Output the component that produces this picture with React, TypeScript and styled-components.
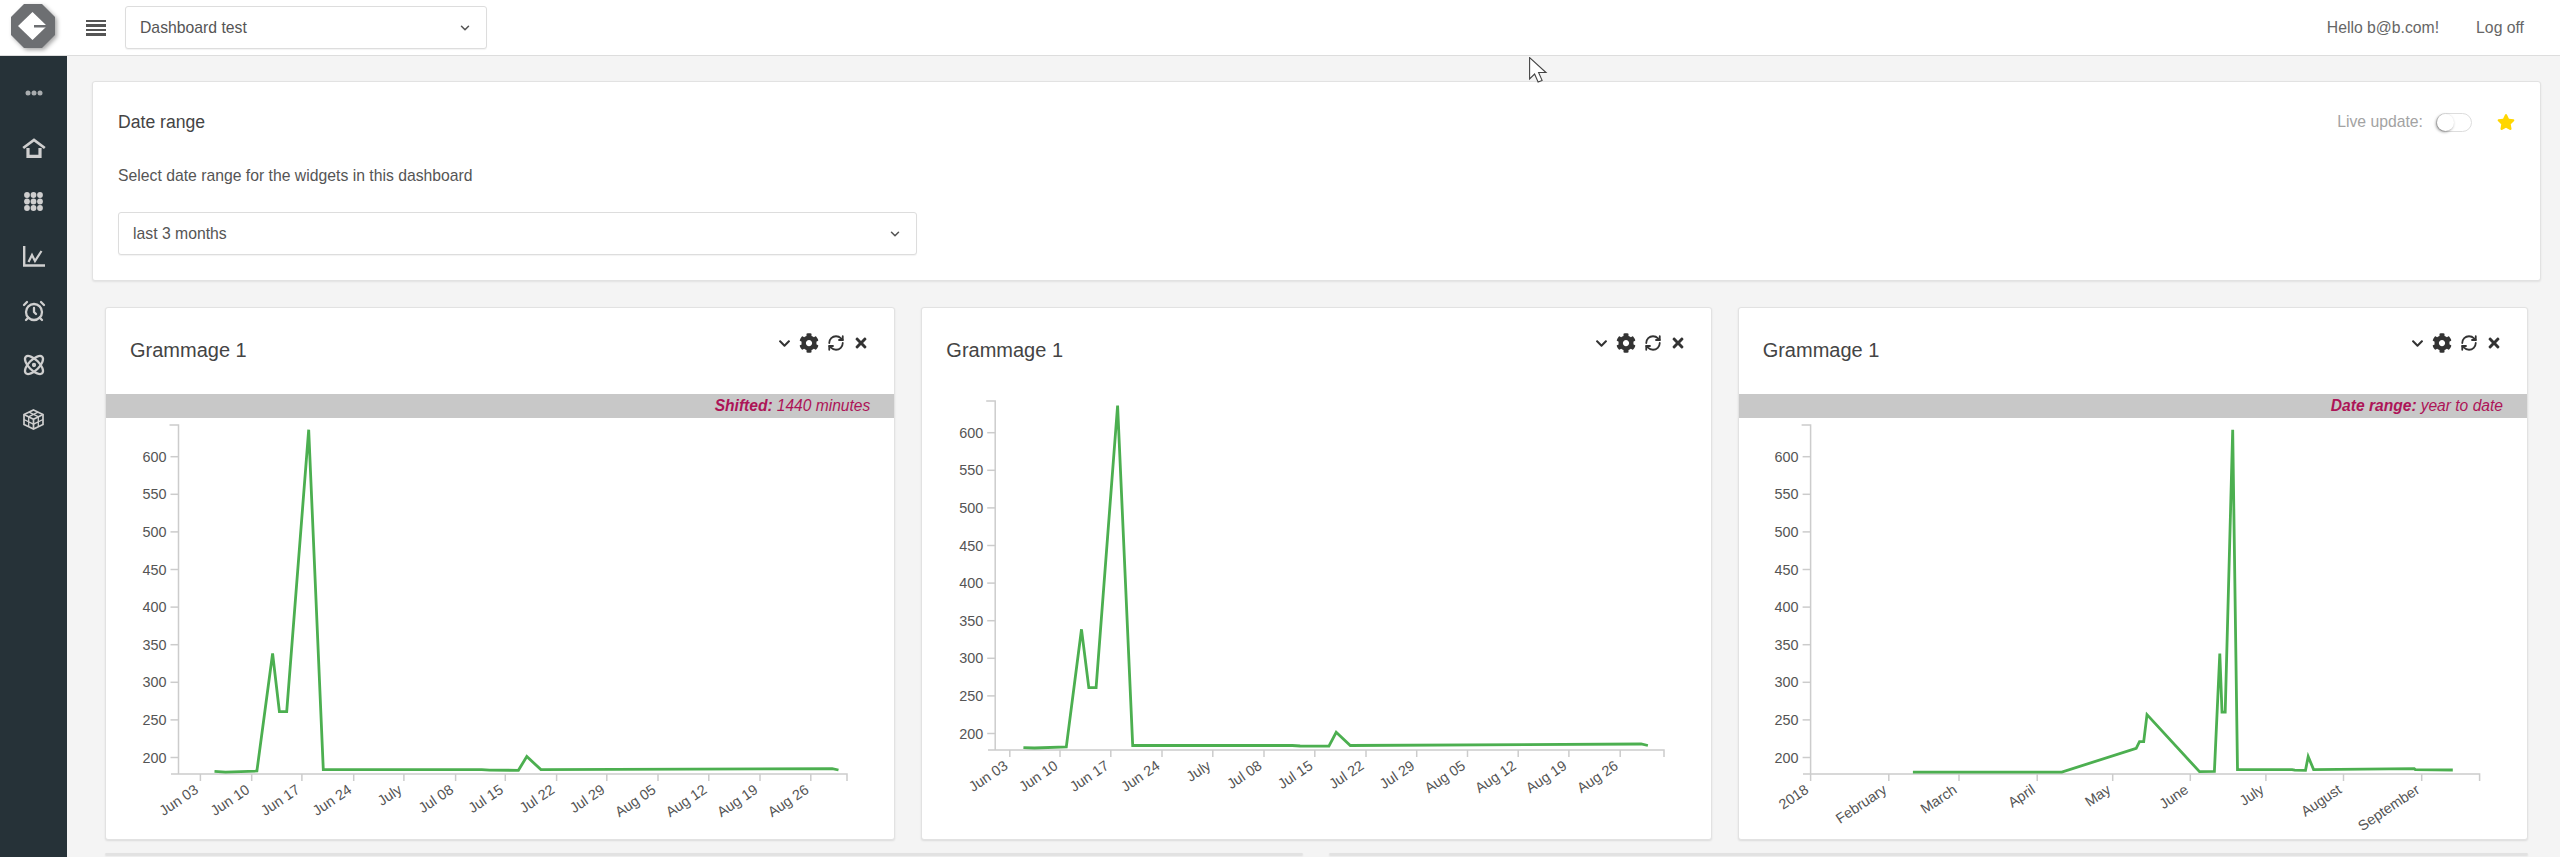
import React from "react";
import styled, { createGlobalStyle } from "styled-components";
import { AlarmClock, Atom, ChevronDown, RefreshCw } from "lucide-react";
import { FaCog, FaStar, FaTimes, FaChevronDown } from "react-icons/fa";

const GlobalStyle = createGlobalStyle`
  html, body {
    margin: 0;
    height: 100%;
    overflow: hidden;
  }
  body {
    font-family: "Liberation Sans", Arial, sans-serif;
    font-size: 15.75px;
    color: #555;
    background: #f4f4f4;
  }
`;

const Page = styled.div`
  position: relative;
  height: 857px;
  display: flex;
  flex-direction: column;
  overflow: hidden;
`;

const Header = styled.header`
  flex: 0 0 56px;
  box-sizing: border-box;
  display: flex;
  align-items: center;
  background: #fff;
  border-bottom: 1px solid #ddd;
`;

const LogoBox = styled.div`
  flex: 0 0 65px;
  padding-bottom: 3px;
  display: flex;
  justify-content: center;
  align-items: center;
`;

const Hamburger = styled.div`
  width: 20px;
  margin: 0 19px 0 21px;
  display: flex;
  flex-direction: column;
  gap: 2px;

  span {
    height: 2.5px;
    background: #555;
  }
`;

const SelectBox = styled.div<{ $width: number }>`
  box-sizing: border-box;
  width: ${(p) => p.$width}px;
  height: 43px;
  padding: 0 14px;
  display: flex;
  align-items: center;
  justify-content: space-between;
  background: #fff;
  border: 1px solid #ddd;
  border-radius: 3px;
  box-shadow: 0 1px 1px rgba(0, 0, 0, 0.05);
  color: #555;
`;

const UserArea = styled.div`
  margin-left: auto;
  padding-right: 36px;
  display: flex;
  gap: 37px;
  color: #666;
`;

const Body = styled.div`
  flex: 1;
  display: flex;
  min-height: 0;
`;

const Sidebar = styled.nav`
  flex: 0 0 67px;
  padding-top: 10px;
  background: #263238;
  display: flex;
  flex-direction: column;
`;

const NavItem = styled.div<{ $dim?: boolean }>`
  height: 54.4px;
  display: flex;
  align-items: center;
  justify-content: center;
  color: ${(p) => (p.$dim ? "#a9adaf" : "#cfcfcf")};
`;

const Main = styled.main`
  flex: 1;
  min-width: 0;
  padding: 25px 19px 0 25px;
`;

const DateCard = styled.section`
  box-sizing: border-box;
  height: 200px;
  padding: 28px 25px 0;
  background: #fff;
  border: 1px solid #e2e2e2;
  border-radius: 3px;
  box-shadow: 0 1px 2px rgba(0, 0, 0, 0.08);
`;

const DateTop = styled.div`
  display: flex;
  align-items: center;
  justify-content: space-between;
  height: 24px;
  margin-bottom: 32px;
`;

const DateTitle = styled.h2`
  margin: 0;
  font-size: 17.6px;
  font-weight: 400;
  color: #444;
`;

const LiveArea = styled.div`
  display: flex;
  align-items: center;
  color: #a3a3a3;
`;

const Toggle = styled.div`
  position: relative;
  box-sizing: border-box;
  width: 36px;
  height: 19px;
  margin: 0 25px 0 13px;
  border: 1px solid #ddd;
  border-radius: 10px;
  background: #fff;

  &::before {
    content: "";
    position: absolute;
    left: 0;
    top: 0;
    width: 17px;
    height: 17px;
    border-radius: 50%;
    background: #fff;
    box-shadow: -1px 1px 3px rgba(0, 0, 0, 0.45);
  }
`;

const HelpText = styled.p`
  margin: 0 0 26px;
  line-height: 20px;
  color: #555;
`;

const WidgetGrid = styled.div`
  margin-top: 26px;
  padding: 0 13px;
  display: grid;
  grid-template-columns: repeat(6, 1fr);
  column-gap: 26px;
  row-gap: 13px;
`;

const WidgetCard = styled.article<{ $span: number }>`
  grid-column: span ${(p) => p.$span};
  min-width: 0;
  background: #fff;
  border: 1px solid #e2e2e2;
  border-radius: 3px;
  box-shadow: 0 1px 2px rgba(0, 0, 0, 0.1);
`;

const WidgetHead = styled.div`
  height: 86px;
  box-sizing: border-box;
  padding: 22px 25px 0 24px;
  display: flex;
  justify-content: space-between;
  align-items: flex-start;
`;

const WidgetTitle = styled.h3`
  margin: 0;
  font-size: 20px;
  line-height: 40px;
  font-weight: 400;
  color: #444;
`;

const WidgetTools = styled.div`
  margin-top: 1px;
  display: flex;
  align-items: center;
  gap: 8px;
  height: 24px;
  color: #333;
`;

const Banner = styled.div`
  height: 24px;
  padding-right: 24px;
  background: #c8c8c8;
  display: flex;
  align-items: center;
  justify-content: flex-end;
  gap: 4px;
  font-size: 15.6px;
  font-style: italic;
  color: #ad1457;

  b {
    font-weight: 700;
  }
`;

const ChartSvg = styled.svg`
  display: block;
`;

const AxisText = styled.text`
  font-family: "Liberation Sans", Arial, sans-serif;
  font-size: 14.4px;
  fill: #555;
`;

const Cursor = styled.svg`
  position: absolute;
  left: 1529px;
  top: 57px;
`;

const Logo = () => (
  <svg width="46" height="46" viewBox="0 0 46 46" style={{ filter: "drop-shadow(2px 2px 2px rgba(0,0,0,.35))" }}>
    <polygon points="14,1 32,1 45,14 45,32 32,45 14,45 1,32 1,14" fill="#6d6f72" />
    <polygon points="22.500,9 8,23 22.500,37 37,23" fill="#fff" />
    <rect x="24" y="22" width="13" height="2.500" fill="#6d6f72" />
  </svg>
);

const HomeIcon = () => (
  <svg width="24" height="20" viewBox="0 0 24 20" fill="none" stroke="currentColor" strokeWidth="2.800">
    <path d="M1.200 10 12 2l10.800 8" />
    <path d="M6 10v8.300h12V10" strokeWidth="3.200" />
  </svg>
);

const GridIcon = () => (
  <svg width="19" height="19" viewBox="0 0 19 19" fill="currentColor">
    {[3, 9.5, 16].flatMap((y) =>
      [3, 9.5, 16].map((x) => <circle key={`${x}-${y}`} cx={x} cy={y} r="2.900" />)
    )}
  </svg>
);

const DotsIcon = () => (
  <svg width="18" height="6" viewBox="0 0 18 6" fill="currentColor">
    <circle cx="3" cy="3" r="2.500" />
    <circle cx="9" cy="3" r="2.500" />
    <circle cx="15" cy="3" r="2.500" />
  </svg>
);

const LineIcon = () => (
  <svg width="22" height="21" viewBox="0 0 22 21" fill="none" stroke="currentColor" strokeWidth="2.400">
    <path d="M1.200 0v19.500H22" />
    <path d="M5.500 16 9 9l3 6 6.500-10" strokeWidth="2.200" />
  </svg>
);

const CubeIcon = () => (
  <svg width="21" height="21" viewBox="0 0 21 21" fill="none" stroke="currentColor" strokeWidth="1.700">
    <path d="M10.500 1 20 5.500v10L10.500 20 1 15.500v-10z" />
    <path d="M1 5.500l9.500 4.700L20 5.500M10.500 10.200V20" />
    <path d="M6 3.200l9.500 4.700M15 3.200 5.500 7.900M1 10.500l9.500 4.700 9.500-4.700M5.700 8v9.500M15.300 8v9.500" strokeWidth="1.300" />
  </svg>
);

type Tick = { x: number; label?: string };
type ChartProps = { ticks: Tick[]; axisX: number; startX: number; endX: number; line: [number, number][] };

const Y_VALUES = [600, 550, 500, 450, 400, 350, 300, 250, 200];
const valueToY = (v: number) => 38.7 + ((600 - v) * 300.8) / 400;
const AXIS_TOP = 7;
const AXIS_BOTTOM = 356;

const Chart = ({ ticks, axisX, startX, endX, line }: ChartProps) => (
  <ChartSvg width="788" height="421" viewBox="1 0 788 421">
    <g stroke="#ccc" strokeWidth="1.500" fill="none">
      <path d={`M${axisX - 9} ${AXIS_TOP}H${axisX}V${AXIS_BOTTOM}`} />
      <path d={`M${startX} ${AXIS_BOTTOM}H${endX}v7`} />
      {Y_VALUES.map((v) => (
        <path key={v} d={`M${axisX - 8} ${valueToY(v)}h8`} />
      ))}
      {ticks.map((t) => (
        <path key={t.x} d={`M${t.x} ${AXIS_BOTTOM}v7`} />
      ))}
    </g>
    {Y_VALUES.map((v) => (
      <AxisText key={v} x={axisX - 12} y={valueToY(v) + 5} textAnchor="end">
        {v}
      </AxisText>
    ))}
    {ticks
      .filter((t) => t.label)
      .map((t) => (
        <AxisText
          key={t.label}
          x={t.x - 1}
          y={AXIS_BOTTOM + 18}
          textAnchor="end"
          transform={`rotate(-34 ${t.x - 1} ${AXIS_BOTTOM + 18})`}
        >
          {t.label}
        </AxisText>
      ))}
    <polyline
      points={line.map((p) => p.join(",")).join(" ")}
      fill="none"
      stroke="#4caf50"
      strokeWidth="2.800"
      strokeLinejoin="miter"
    />
  </ChartSvg>
);

const WEEK_LABELS = [
  "Jun 03", "Jun 10", "Jun 17", "Jun 24", "July", "Jul 08", "Jul 15",
  "Jul 22", "Jul 29", "Aug 05", "Aug 12", "Aug 19", "Aug 26",
];

const CHART_SHIFTED: ChartProps = {
  axisX: 73.5,
  startX: 66,
  endX: 742,
  ticks: [95.4, 146.7, 196.9, 248.7, 298.9, 350.6, 400.3, 451.6, 501.8, 553, 603.8, 655, 705.8].map((x, i) => ({
    x,
    label: WEEK_LABELS[i],
  })),
  line: [
    [109.5, 353.4], [120.5, 354.1], [151.9, 353], [167.6, 235.5], [174.4, 293.7], [181.7, 293.7],
    [203.7, 11.7], [218.3, 351.6], [376.8, 351.6], [384.6, 352.2], [413.4, 352.3], [421.8, 338.5],
    [435.9, 351.6], [727.2, 350.6], [733.5, 352],
  ],
};

const CHART_PLAIN: ChartProps = {
  axisX: 74.2,
  startX: 67,
  endX: 743,
  ticks: [88.8, 139, 189.8, 241, 291.8, 343, 393.8, 445, 495.7, 546.5, 597.2, 647.9, 699.2].map((x, i) => ({
    x,
    label: WEEK_LABELS[i],
  })),
  line: [
    [102.4, 353.6], [113.4, 354], [145.3, 352.9], [160.5, 235.3], [167.8, 293.6], [175.1, 293.6],
    [196.6, 11.5], [211.7, 351.5], [371.3, 351.5], [379.1, 352], [407.9, 352.2], [415.2, 338.3],
    [429.3, 351.5], [720.1, 350], [726.9, 351.5],
  ],
};

const CHART_YEAR: ChartProps = {
  axisX: 72.6,
  startX: 65,
  endX: 741.6,
  ticks: [
    { x: 72.6, label: "2018" },
    { x: 150.8, label: "February" },
    { x: 221, label: "March" },
    { x: 299.2, label: "April" },
    { x: 374.7, label: "May" },
    { x: 452.3, label: "June" },
    { x: 527.9, label: "July" },
    { x: 605.5, label: "August" },
    { x: 683.7, label: "September" },
  ],
  line: [
    [174.9, 354.1], [323.8, 354.1], [398.2, 330.3], [401.5, 323.6], [405.7, 323.6], [409, 296.6],
    [461.5, 353.7], [476.4, 353.4], [481.8, 235.5], [484, 294.1], [487.2, 294.1], [494.7, 11.7],
    [499.5, 351.6], [554.1, 351.6], [556.8, 352.2], [567.5, 352.3], [570.2, 338.5], [575.6, 351.6],
    [676.2, 350.6], [677.3, 351.6], [714.8, 352],
  ],
};

const Widget = ({ chart, label, value }: { chart: ChartProps; label?: string; value?: string }) => (
  <WidgetCard $span={2}>
    <WidgetHead>
      <WidgetTitle>Grammage 1</WidgetTitle>
      <WidgetTools>
        <FaChevronDown size={13} />
        <FaCog size={20} />
        <RefreshCw size={18} strokeWidth={2.4} />
        <FaTimes size={16} />
      </WidgetTools>
    </WidgetHead>
    {label && (
      <Banner>
        <b>{label}</b>
        <span>{value}</span>
      </Banner>
    )}
    <Chart {...chart} />
  </WidgetCard>
);

export default function App() {
  return (
    <Page>
      <GlobalStyle />
      <Header>
        <LogoBox>
          <Logo />
        </LogoBox>
        <Hamburger>
          <span />
          <span />
          <span />
          <span />
        </Hamburger>
        <SelectBox $width={362}>
          Dashboard test
          <ChevronDown size={14} strokeWidth={2.6} />
        </SelectBox>
        <UserArea>
          <span>Hello b@b.com!</span>
          <span>Log off</span>
        </UserArea>
      </Header>
      <Body>
        <Sidebar>
          <NavItem $dim><DotsIcon /></NavItem>
          <NavItem><HomeIcon /></NavItem>
          <NavItem><GridIcon /></NavItem>
          <NavItem><LineIcon /></NavItem>
          <NavItem><AlarmClock size={24} strokeWidth={2.3} /></NavItem>
          <NavItem><Atom size={24} strokeWidth={2.3} /></NavItem>
          <NavItem><CubeIcon /></NavItem>
        </Sidebar>
        <Main>
          <DateCard>
            <DateTop>
              <DateTitle>Date range</DateTitle>
              <LiveArea>
                Live update:
                <Toggle />
                <FaStar size={18} color="#ffd600" />
              </LiveArea>
            </DateTop>
            <HelpText>Select date range for the widgets in this dashboard</HelpText>
            <SelectBox $width={799}>
              last 3 months
              <ChevronDown size={14} strokeWidth={2.6} />
            </SelectBox>
          </DateCard>
          <WidgetGrid>
            <Widget chart={CHART_SHIFTED} label="Shifted:" value="1440 minutes" />
            <Widget chart={CHART_PLAIN} />
            <Widget chart={CHART_YEAR} label="Date range:" value="year to date" />
            <WidgetCard $span={3} />
            <WidgetCard $span={3} />
          </WidgetGrid>
        </Main>
      </Body>
      <Cursor width="19" height="27" viewBox="0 0 19 27">
        <path d="M.6.6V22l5-5 3.500 8 4-1.600-3.500-7.900H17z" fill="#fff" stroke="#444" strokeWidth="1.100" />
      </Cursor>
    </Page>
  );
}
